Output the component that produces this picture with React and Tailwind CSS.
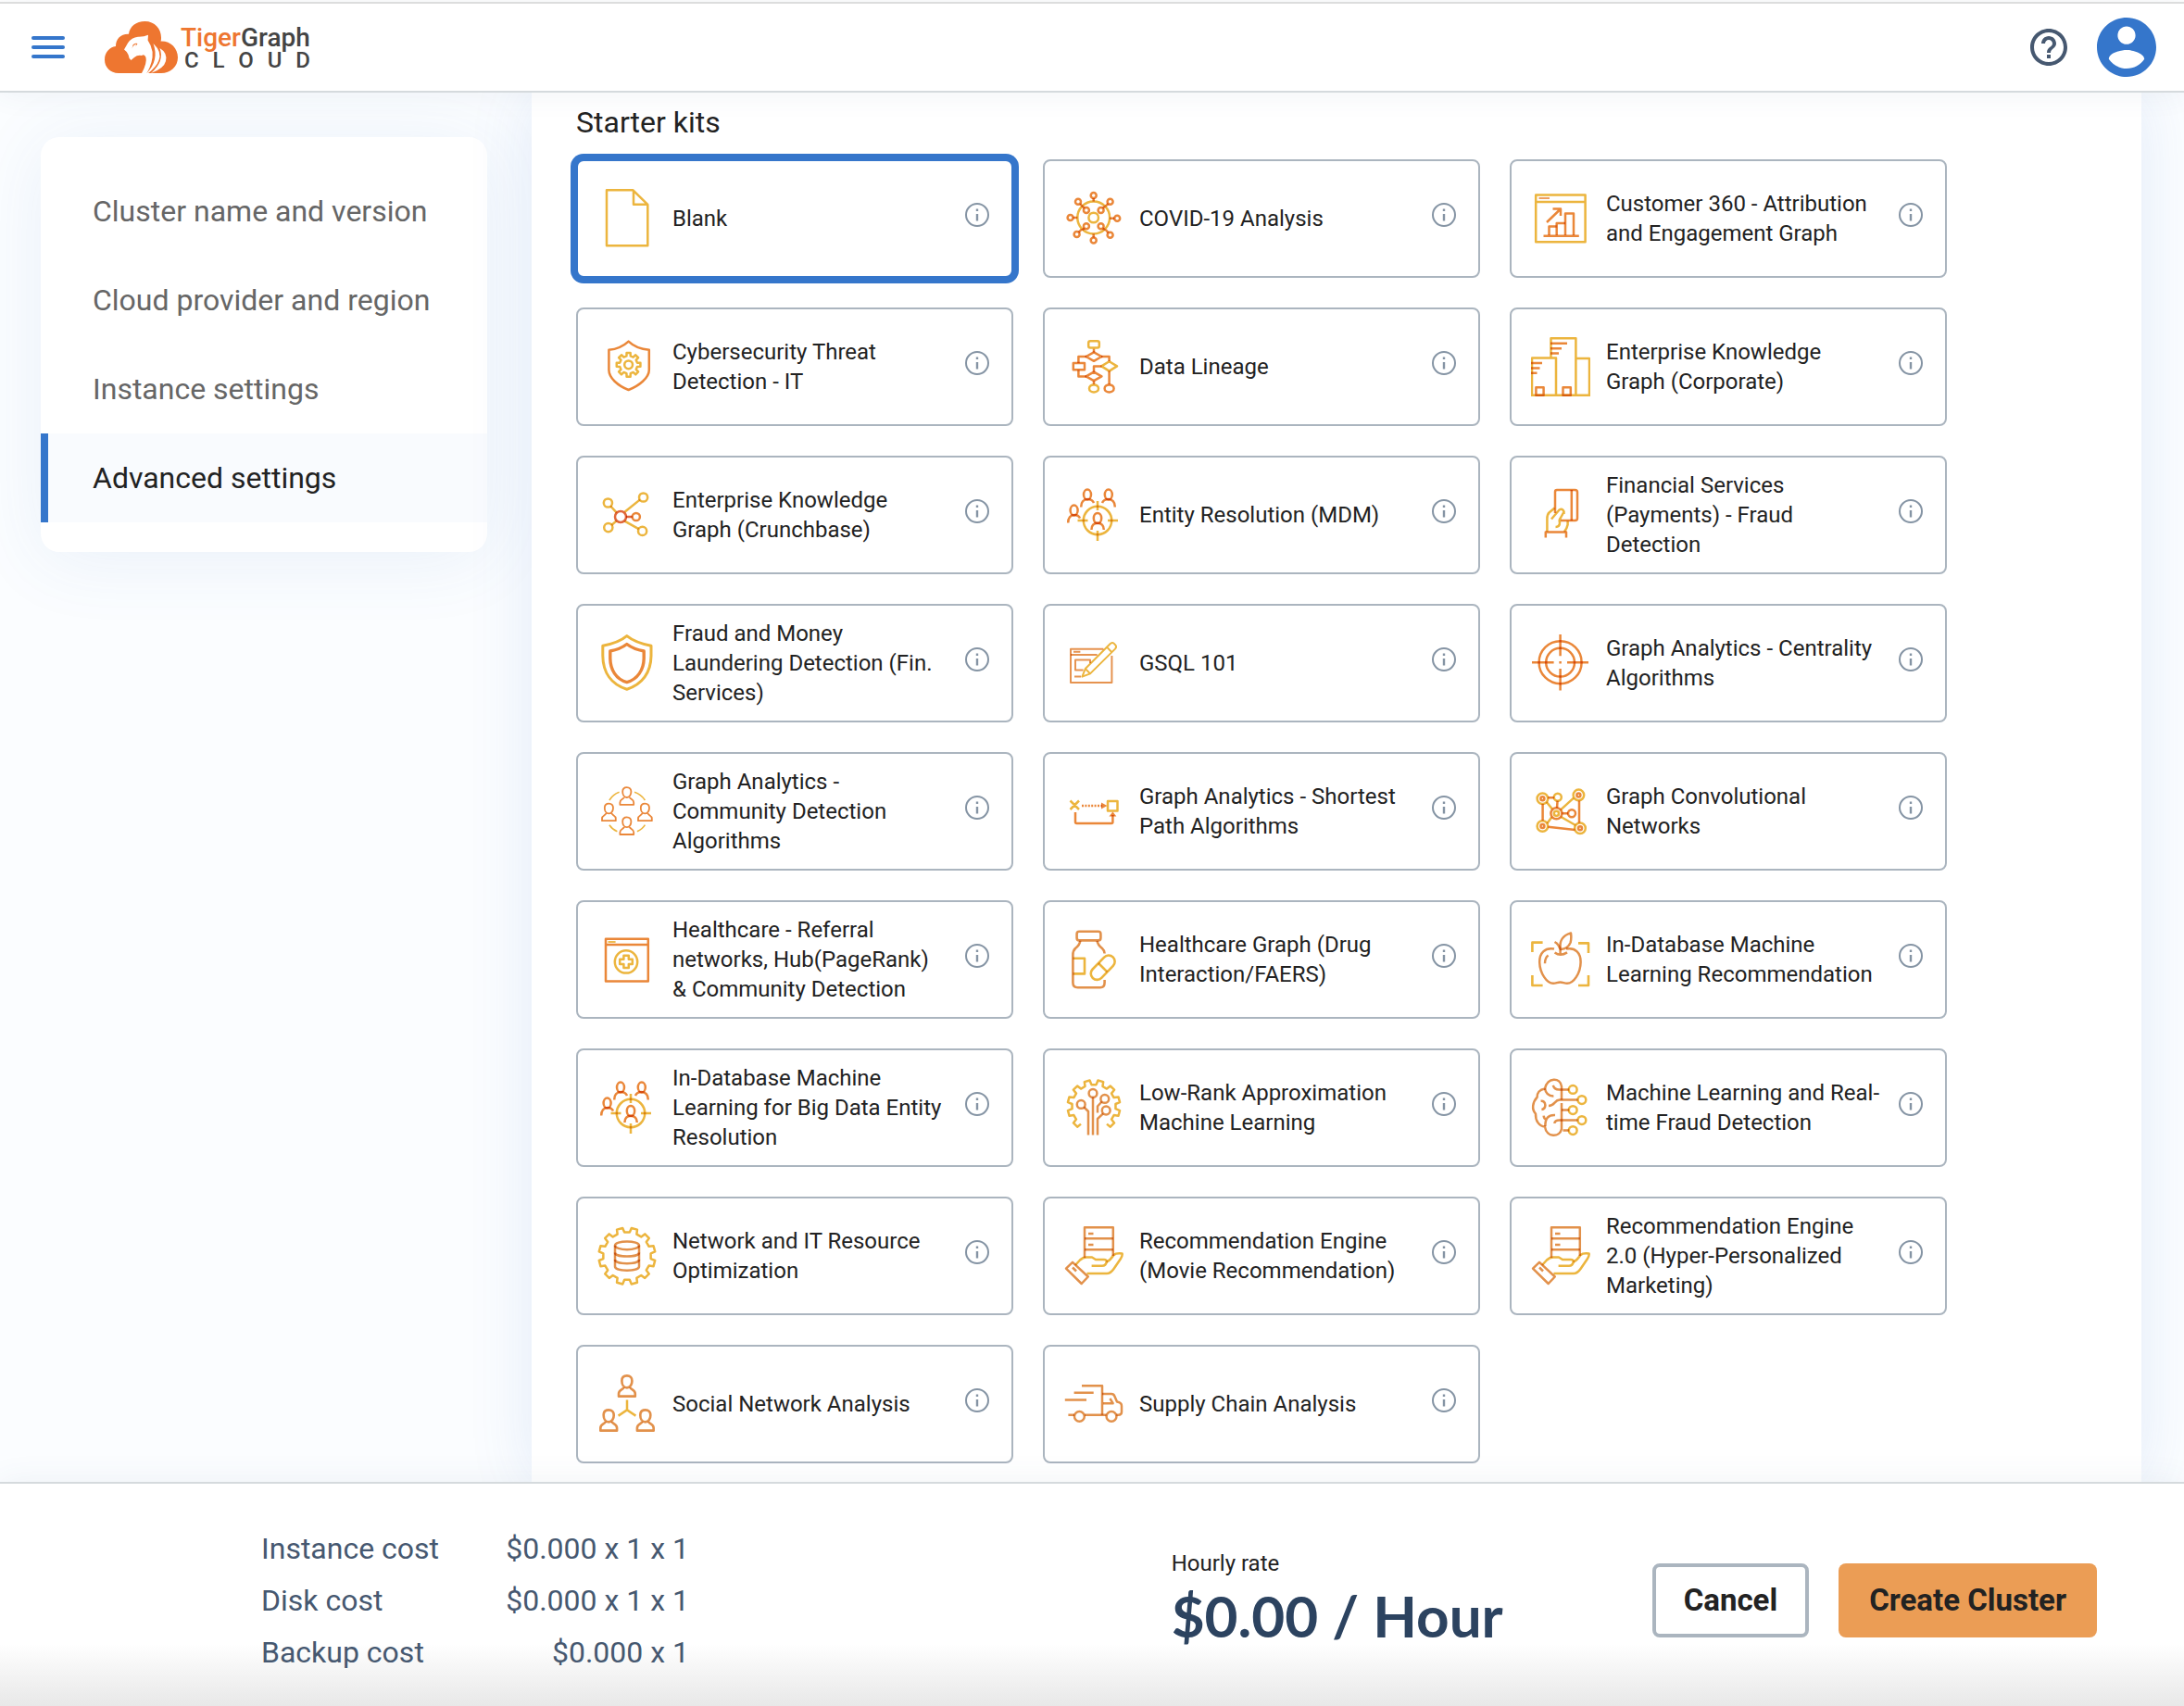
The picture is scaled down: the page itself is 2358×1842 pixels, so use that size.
import React, { useState } from "react";

const Y = "#ecb53e";
const O = "#ea8739";
const R = "#e0673a";

// Outline of a toothed wheel; from/to pick the run of teeth that is drawn.
function gearPath(cx, cy, teeth, outer, inner, from = 0, to = teeth) {
  const step = (Math.PI * 2) / teeth;
  const at = (r, a) => `${(cx + r * Math.sin(a)).toFixed(2)} ${(cy - r * Math.cos(a)).toFixed(2)}`;
  const points = [];
  for (let i = from; i < to; i++) {
    const a = i * step;
    points.push(at(inner, a - step * 0.29), at(outer, a - step * 0.2), at(outer, a + step * 0.2), at(inner, a + step * 0.29));
  }
  return "M" + points.join("L") + (to - from === teeth ? "Z" : "");
}

function Bust({ x, y, s = 1 }) {
  return (
    <g transform={`translate(${x} ${y}) scale(${s})`}>
      <path d="M0 .8C-3 .8-4.6 2.6-4.6 5.4C-4.6 8.6-3 11.6 0 11.6S4.6 8.6 4.6 5.4C4.6 2.6 3 .8 0 .8Z" />
      <path d="M-3 11.4C-3.4 13.6-7.4 13.4-7.4 17V19.4H7.4V17C7.4 13.4 3.4 13.6 3 11.4" />
    </g>
  );
}

function TargetPeople() {
  return (
    <>
      <g stroke={Y}>
        <circle cx="36" cy="38" r="15.2" />
        <path d="M36 17V27M36 49V60M14.5 38H25.5M47 38H58" />
      </g>
      <g stroke={O}>
        <ellipse cx="25" cy="10" rx="4" ry="5.5" />
        <path d="M18.3 23.5C18 18 21 15 25 15S31 16.5 32 19" />
        <ellipse cx="47.8" cy="10" rx="4" ry="5.5" />
        <path d="M41 19C42 16.5 44 15 47.8 15S55 18 54.7 23.5" />
        <ellipse cx="10.6" cy="27" rx="4" ry="5.5" />
        <path d="M4.2 40.5C4 35 7 32 10.6 32S16 33 17 35.5" />
        <ellipse cx="36" cy="35.5" rx="4.2" ry="5.5" />
        <path d="M29.5 48C29.3 43.5 32 40.8 36 40.8S42.9 43.5 42.7 48" />
      </g>
    </>
  );
}

function ServerHand() {
  return (
    <>
      <g stroke={Y}>
        <path d="M12 42L17 36.5Q20 33.5 24 33.5H30L34 36H43Q46 36 45.6 38.8Q45 42.7 41 42.7H29.6" />
        <path d="M45.6 38.6Q50 36.5 53.5 31Q56 28.6 62.5 29.4Q63.3 31 61 35L53.5 46Q50 51 46 51H24.5" />
      </g>
      <g stroke="#e2914b">
        <path d="M22 34V1.3H52.8V32" />
        <path d="M22 13.3H52.8M22 25.3H52.8" />
        <path d="M26 8H31.5M26 20H31.5" />
        <path d="M9 38.8L2 45.6L18.7 62L25.8 54.5Z" />
        <path d="M9 44.5L13 48.5" />
      </g>
    </>
  );
}

const ICONS = {
  blank: <path stroke={Y} d="M10 1.3H38.5L54.3 16.8V61.3H10ZM39 1.5V16.8H54.3" />,
  covid: (
    <>
      <g stroke={Y}>
        <circle cx="31.7" cy="31" r="17.4" />
        <circle cx="31.7" cy="31" r="5.3" />
      </g>
      <g stroke={O}>
        <circle cx="31.7" cy="7" r="3" />
        <circle cx="57.2" cy="31.7" r="3" />
        <circle cx="6.6" cy="31" r="3" />
        <circle cx="31.7" cy="55.6" r="3" />
        <circle cx="15" cy="13.7" r="3" />
        <circle cx="49.6" cy="13.7" r="3" />
        <circle cx="13.6" cy="49" r="3" />
        <circle cx="49.6" cy="49.7" r="3" />
        <circle cx="23.9" cy="23" r="3" />
        <circle cx="39.6" cy="23" r="3" />
        <circle cx="23.9" cy="40.3" r="3" />
        <circle cx="39.6" cy="40.3" r="3" />
        <path d="M31.7 10V13.5M54.2 31.7H49M9.6 31H14.3M31.7 48.5V52.6M17.2 16L19.5 18.8M47.5 16L44.5 18.6M15.7 46.8L18.8 43.5M47.6 47.4L44.8 44M21.8 20.8L19.6 18.6M41.8 20.8L44 18.6M21.8 42.4L19.4 44.4M41.8 42.4L44.2 44.4" />
      </g>
    </>
  ),
  customer: (
    <>
      <path stroke={Y} d="M5.2 6.4H58.6V57.3H5.2ZM5.2 14H58.6" />
      <g stroke={O}>
        <path strokeWidth="1.6" d="M8.5 10H20" />
        <path d="M13.5 50.7H51.8" />
        <path d="M19.5 50V40.5H27.7" />
        <path d="M27.7 50V37H37" />
        <path d="M37 50V26.5H46V50" />
        <path d="M17 36L31.5 22M23.5 21.5H32V29" />
      </g>
    </>
  ),
  cyber: (
    <>
      <path stroke={O} d="M33.6 4.6Q25 12.6 12.4 13.8V35.5C12.4 44 22 52.5 33.6 57C45 52.5 55.8 44 55.8 35.5V13.8Q42 12.6 33.6 4.6Z" />
      <path stroke={Y} d={gearPath(33.6, 29.8, 8, 13, 9.6)} />
      <circle stroke={Y} cx="33.6" cy="29.8" r="4.4" />
    </>
  ),
  lineage: (
    <>
      <g stroke={O}>
        <path d="M32 12V16.5M24 21H15.4V28M40 21H48.6V26M15.4 35.4V42.6H24M40.5 31.4H32V37.8M32 47.4V51M48.6 36.6V51" />
        <path d="M32 16.3L40.4 21L32 25.8L23.6 21Z" />
        <path d="M32 37.6L40.4 42.4L32 47.2L23.6 42.4Z" />
        <path d="M9.8 28H22V35.2H9.8Z" />
        <ellipse cx="48.6" cy="55.4" rx="5" ry="4" />
      </g>
      <g stroke={Y}>
        <rect x="26.2" y="4.3" width="11.6" height="7.2" rx="2" />
        <path d="M48.6 26.2L57 31.4L48.6 36.6L40.2 31.4Z" />
        <ellipse cx="32" cy="55.4" rx="5" ry="4" />
      </g>
    </>
  ),
  corporate: (
    <>
      <path stroke={Y} d="M21.5 22.5V1.3H48.4V62.8M1 62.8V22.5H27V62.8M48.4 23H63V62.8M0 62.8H64" />
      <g stroke={O}>
        <path d="M21 6.8H39M21 12.2H33M21 17.5H30M0 28H12M0 33.5H9.5M0 38.8H6.5" />
        <path d="M5.4 54.3H13.6V62.8H5.4ZM34.5 54.3H42.8V62.8H34.5Z" />
      </g>
    </>
  ),
  crunchbase: (
    <>
      <path stroke={Y} d="M14.3 22.5L20.8 29.6M45.8 15.6L29.5 28.8M15.2 43L20.6 38.4M44.6 47.2L29.4 38.6" />
      <g stroke={Y}>
        <circle cx="11.4" cy="19" r="4.6" />
        <circle cx="49.6" cy="13" r="4.6" />
        <circle cx="11.8" cy="45.6" r="4.6" />
        <circle cx="48.6" cy="49.4" r="4.6" />
      </g>
      <g stroke={R}>
        <circle cx="25" cy="34" r="6" />
        <path d="M31 34H37.6" />
      </g>
      <circle stroke={O} cx="41.8" cy="34" r="4.1" />
    </>
  ),
  entity: <TargetPeople />,
  payments: (
    <>
      <g stroke={O}>
        <path d="M26 30V7Q26 5 28 5H47.5Q50 5 50 7.5V35.5Q50 38 47.5 38H32" />
        <path d="M43.8 5V38" />
        <path d="M15.8 56.5V50.6H38V56.5" />
      </g>
      <path stroke={Y} d="M25.5 24.5L19.5 29.5Q17.5 31.5 17.4 36V50M22 36.5L30.5 26.5Q34 24.5 35.6 28.5L32 35Q30 37.5 31 40Q31 45 26.5 45M35.5 29V31M39.6 38.5V42.5Q39 46 36 50" />
    </>
  ),
  fraud: (
    <>
      <path stroke={Y} strokeWidth="3" d="M31.8 2.6Q23 10 5.8 13.2V24C6 42 15 55 31.8 60.2C48.5 55 57.8 42 58 24V13.2Q41 10 31.8 2.6Z" />
      <path stroke={O} strokeWidth="3.4" d="M31.8 11.5Q24.5 17 13.8 19V27C14 39 20 49.5 31.8 52.6C43.5 49.5 50 39 50.2 27V19Q39 17 31.8 11.5Z" />
    </>
  ),
  gsql: (
    <>
      <g stroke="#e69350" strokeWidth="2">
        <path d="M42.4 16.8H7V53H51.4V24" />
        <path d="M7 23H35.6M10 19.7H17.4M28 32V28.4H12V39.4H20.6M11 46.4H18" />
      </g>
      <path stroke={Y} strokeWidth="2" d="M19.4 46.6L22.8 38L49.5 11.2Q52 8.6 54.4 11.4Q57.4 14 55 16.6L28 43.4ZM46 14.6L51.4 20.2M22.8 38L28 43.4" />
    </>
  ),
  centrality: (
    <g stroke={O}>
      <circle cx="31.6" cy="31.2" r="23" />
      <circle cx="31.6" cy="31.2" r="15.4" />
      <path d="M31.6 1V24.3M31.6 38V61.5M1 31.2H24.6M39 31.2H62M31.6 30V32.4" />
    </g>
  ),
  community: (
    <>
      <path stroke={Y} strokeWidth="1.6" d="M12.9 20Q17 13.5 23.6 11.3M40 11.3Q47 13.5 51.4 20M12.9 46.7Q16 51.5 21.4 53.7M51.4 46.7Q48.5 51.5 42.9 53.7" />
      <g stroke={O} strokeWidth="1.8">
        <Bust x={31.8} y={5.4} />
        <Bust x={12.4} y={22.8} />
        <Bust x={51.4} y={22.8} />
        <Bust x={31.8} y={37.6} />
      </g>
    </>
  ),
  shortest: (
    <>
      <path stroke={Y} d="M6.5 20.5L16 30M16 20.5L6.5 30M47 21H57.5V31.6H47Z" />
      <g stroke={O}>
        <path strokeDasharray="2 1.4" d="M19 26H41" />
        <path d="M12 33V43.5Q12 45 13.5 45H51Q52.4 45 52.4 43.5V36" />
      </g>
      <path fill={O} stroke="none" d="M40 22.4L46.4 26L40 29.6ZM48.4 37.4L52.4 32.5L56.4 37.4Z" />
    </>
  ),
  convolutional: (
    <>
      <path stroke={Y} d="M16.8 22L23 29.6M46 17.6L32 30.4M17.4 45L22.4 38.2M48 47L32.4 38" />
      <g stroke={O}>
        <path d="M12.6 24V42M18.4 48.8L47.4 52M52 20.4V44.4M18.2 17.2H25M28.6 20.6L28 28.4M33.4 34.3H40" />
        <circle cx="12.4" cy="18.2" r="2" />
        <circle cx="51.4" cy="14.4" r="2" />
        <circle cx="12.4" cy="48" r="2" />
        <circle cx="53" cy="50.3" r="2" />
        <circle cx="44" cy="34.3" r="4" />
        <circle cx="27.4" cy="34.3" r="6" />
      </g>
      <g stroke={Y}>
        <circle cx="12.4" cy="18.2" r="5.8" />
        <circle cx="51.4" cy="14.4" r="5.8" />
        <circle cx="12.4" cy="48" r="5.8" />
        <circle cx="53" cy="50.3" r="5.8" />
        <circle cx="28.8" cy="16.8" r="4" />
        <circle cx="27.4" cy="34.3" r="2.6" />
      </g>
    </>
  ),
  referral: (
    <>
      <path stroke={O} d="M9 9.8H54.8V55.6H9ZM9 16H54.8" />
      <g stroke={Y}>
        <path strokeWidth="1.8" d="M11.5 13H19.6" />
        <circle cx="31" cy="34.4" r="12.2" />
        <path d="M28.4 27.8H33.8V31.8H37.8V37H33.8V41H28.4V37H24.2V31.8H28.4Z" />
      </g>
    </>
  ),
  drug: (
    <>
      <g stroke="#e2914b" strokeWidth="2.6">
        <rect x="13.6" y="1.8" width="25.8" height="9.6" rx="2.6" />
        <path d="M17.2 11.8Q17 16 12 20Q9.4 22.5 9.4 27V57Q9.4 62.2 14.6 62.2H39Q43.6 62.2 43.6 57V54M35.6 11.8Q36 16 41 20Q43.4 22 43.6 25.5" />
      </g>
      <g stroke={Y} strokeWidth="2.6">
        <path d="M9.4 30.8H22V47.4H9.4" />
        <rect x="26" y="34" width="31.4" height="13.4" rx="6.7" transform="rotate(-46 41.7 40.7)" />
        <path d="M37 36L46.4 45.4" />
      </g>
    </>
  ),
  apple: (
    <>
      <path stroke={Y} strokeWidth="2.6" d="M1.4 24V13.6H12.6M51 14.4H62V25M1.4 49V60H12.6M62 49V60H51" />
      <g stroke="#e2914b">
        <path d="M25 20.6C15 18.6 9 25 9.2 35C9.6 47 17 57.8 24 57.8C27 57.8 28.6 56.4 31.5 56.4S36 57.8 39 57.8C46 57.8 53.4 47 53.6 35C53.8 25 48 18.6 38 20.6" />
        <path d="M25.5 13Q30 15.5 31.6 21.5V27M25.6 24.4Q31.6 29 39 24.4" />
        <path d="M32 21Q40 20.4 42.6 13.6Q43.8 9 43 3.4Q36.5 5.4 33.6 9.6Q30.5 14 32 21Z" />
        <path d="M15 36.2Q15 30 18.6 27.4" />
      </g>
    </>
  ),
  bigdata: <TargetPeople />,
  lowrank: (
    <>
      <path stroke={Y} d={gearPath(32, 30.6, 12, 28.4, 23.6, -4.5, 5.5)} />
      <g stroke="#e2914b">
        <circle cx="31" cy="16.4" r="4.4" />
        <circle cx="18.2" cy="28.4" r="4.4" />
        <circle cx="43.8" cy="22.4" r="4.4" />
        <circle cx="45.2" cy="35" r="4.4" />
        <path d="M31 20.8V61.5M21.4 31.5L26 36V61.5M42 38.4L36 44V61.5M40.6 25.5L36 30.5V37.5" />
      </g>
    </>
  ),
  brain: (
    <>
      <g stroke={Y}>
        <circle cx="45.2" cy="12.4" r="4.4" />
        <circle cx="54.9" cy="23.6" r="4.4" />
        <circle cx="45.2" cy="34.6" r="4.4" />
        <circle cx="54.9" cy="45.6" r="4.4" />
        <circle cx="45.2" cy="56.6" r="4.4" />
      </g>
      <g stroke="#e2914b">
        <path d="M33 23.6V9C32 -1 17.5 -1.4 15 11.4C9 12.4 6.4 16.4 6.6 20.6C1.6 26 .4 34 5 38.6C4.6 46 8.6 52 15 52.6C16.6 64.4 31 64.4 33 55V27" />
        <path d="M23.8 7.8Q25.4 12.8 31 12.4H41M50.6 23.6H31C25 23.6 26 30 19 30M33 34.6H41M50.6 45.6H31Q25.4 45.4 25.4 49M34.5 56.6H41" />
        <path d="M15 11.4Q16.4 19.6 24.4 19.4M10.6 24.8Q15 24.4 15.4 29.4Q15.2 33.4 11.4 34M26 40Q15 39.4 15.4 52M13.6 40.6Q14 44.4 17 44.8" />
      </g>
    </>
  ),
  network: (
    <>
      <path stroke={Y} d={gearPath(32, 32.2, 12, 30.6, 25.8, 0.5, 12.5)} />
      <g stroke="#e2914b">
        <ellipse cx="32" cy="20.8" rx="13" ry="4.4" />
        <path d="M19 20.8V43.6C19 49 45 49 45 43.6V20.8" />
        <path d="M19 28.4C19 34 45 34 45 28.4" />
        <path d="M19 36C19 41.6 45 41.6 45 36" />
      </g>
    </>
  ),
  movie: <ServerHand />,
  marketing: <ServerHand />,
  social: (
    <>
      <path stroke={Y} d="M32 27.4V38.4L22.6 44.6M32 38.4L41.4 44.6" />
      <g stroke="#e2914b" strokeWidth="2.2">
        <Bust x={31.9} y={0.4} s={1.2} />
        <Bust x={12.2} y={37.4} s={1.2} />
        <Bust x={51.8} y={37.4} s={1.2} />
      </g>
    </>
  ),
  supply: (
    <g stroke="#e2914b">
      <path d="M19 12.2H41V43.8M10.6 19.8H31.7M.8 27.4H24" />
      <path d="M4.4 43.8H11M22 43.8H45.4" />
      <circle cx="16.4" cy="45.4" r="5.4" />
      <circle cx="51" cy="45.4" r="5.4" />
      <path d="M41 21H51Q53.4 21 54.4 23.4L57 29.6Q62 30.4 62 34V40.6Q62 43.8 58.6 43.8H56.4" />
      <path d="M42 31.2H52.6L49.4 26" />
    </g>
  ),
};

const KITS = [
  ["blank", "Blank"],
  ["covid", "COVID-19 Analysis"],
  ["customer", "Customer 360 - Attribution and Engagement Graph"],
  ["cyber", "Cybersecurity Threat Detection - IT"],
  ["lineage", "Data Lineage"],
  ["corporate", "Enterprise Knowledge Graph (Corporate)"],
  ["crunchbase", "Enterprise Knowledge Graph (Crunchbase)"],
  ["entity", "Entity Resolution (MDM)"],
  ["payments", "Financial Services (Payments) - Fraud Detection"],
  ["fraud", "Fraud and Money Laundering Detection (Fin. Services)"],
  ["gsql", "GSQL 101"],
  ["centrality", "Graph Analytics - Centrality Algorithms"],
  ["community", "Graph Analytics - Community Detection Algorithms"],
  ["shortest", "Graph Analytics - Shortest Path Algorithms"],
  ["convolutional", "Graph Convolutional Networks"],
  ["referral", "Healthcare - Referral networks, Hub(PageRank) &\u00a0Community Detection"],
  ["drug", "Healthcare Graph (Drug Interaction/FAERS)"],
  ["apple", "In-Database Machine Learning Recommendation"],
  ["bigdata", "In-Database Machine Learning for Big Data Entity Resolution"],
  ["lowrank", "Low-Rank Approximation Machine Learning"],
  ["brain", "Machine Learning and Real-time Fraud Detection"],
  ["network", "Network and IT Resource Optimization"],
  ["movie", "Recommendation Engine (Movie Recommendation)"],
  ["marketing", "Recommendation Engine 2.0 (Hyper-Personalized Marketing)"],
  ["social", "Social Network Analysis"],
  ["supply", "Supply Chain Analysis"],
];

const STEPS = ["Cluster name and version", "Cloud provider and region", "Instance settings", "Advanced settings"];

const COSTS = [
  ["Instance cost", "$0.000 x 1 x 1"],
  ["Disk cost", "$0.000 x 1 x 1"],
  ["Backup cost", "$0.000 x 1"],
];

function KitIcon({ name }) {
  return (
    <svg
      viewBox="0 0 64 64"
      className="isolate size-16 shrink-0 [&_circle]:mix-blend-multiply [&_ellipse]:mix-blend-multiply [&_path]:mix-blend-multiply"
      fill="none"
      strokeWidth="2.5"
      strokeLinejoin="round"
      aria-hidden="true"
    >
      {ICONS[name]}
    </svg>
  );
}

function KitCard({ id, title, selected, onSelect }) {
  return (
    <div
      className={
        selected
          ? "flex h-32 items-center rounded-lg border-2 border-[#3576cb] bg-white pr-6 pl-[21px] shadow-[0_0_0_6px_#3576cb]"
          : "flex h-32 items-center rounded-lg border-2 border-[#abb5bf] bg-white pr-6 pl-[21px]"
      }
    >
      <label className="flex h-full flex-1 cursor-pointer items-center gap-[17px]">
        <input type="radio" name="starter-kit" value={id} checked={selected} onChange={onSelect} className="sr-only" />
        <KitIcon name={id} />
        <span className="flex-1 text-2xl leading-8 text-[#222]">{title}</span>
      </label>
      <button type="button" aria-label={`About ${title}`} className="mb-2 ml-[17px] shrink-0">
        <svg viewBox="0 0 26 26" className="size-[26px]" aria-hidden="true">
          <circle cx="13" cy="13" r="12" fill="none" stroke="#8594a4" strokeWidth="2" />
          <path fill="#8594a4" d="M11.8 6.6h2.4V9h-2.4zM11.8 12h2.4v7.4h-2.4z" />
        </svg>
      </button>
    </div>
  );
}

function Logo() {
  return (
    <a href="#home" className="flex items-start" aria-label="TigerGraph Cloud">
      <svg viewBox="0 0 80 56" className="h-14 w-20" aria-hidden="true">
        <path
          fill="#ee7630"
          d="M15 56C6 56 0 49.500 0 41.500C0 33.500 5 28 12 27C12 19.500 17 13.500 26 13.800C27 5.500 34 0 43.500 0C54 0 61 8 61 17.500C61 19 61 20.500 60.500 21.500C71 21 79 29 79 39C79 49 71 56 61 56H50Z"
        />
        <path
          fill="#fff"
          d="M21 30.500L25 23.500Q29 17.500 36 16.800Q42 17 47 14.800L46.600 20.500Q50.500 26 51.600 33Q52.500 44 45.500 56H40Q46 45 44.500 39Q43 35 40 37Q35.500 36 32 39L28.500 42Q26 40 25.500 36Q24.500 33 21 30.500Z"
        />
        <path fill="#ee7630" d="M29.500 29.500L30.500 25.500Q32.500 23 35.500 24L33.600 27L34 24.600Q31 25.500 29.500 29.500Z" />
        <path fill="#fff" d="M52.500 24Q62 33 58.500 42Q56 49 47 56H45.500Q59 42 52.500 24Z" />
        <path fill="#fff" d="M59.500 29Q68 34 66 43Q64 51 50 56Q65 43 59.500 29Z" />
      </svg>
      <span className="ml-0.5 flex flex-col pt-1 font-medium text-[#444]">
        <span className="text-[28px] leading-7">
          <span className="text-[#ee7630]">Tiger</span>Graph
        </span>
        <span className="flex justify-between pl-1 text-2xl leading-5">
          <span>C</span>
          <span>L</span>
          <span>O</span>
          <span>U</span>
          <span>D</span>
        </span>
      </span>
    </a>
  );
}

function Header() {
  return (
    <header className="relative z-10 mt-0.5 flex h-[98px] items-center justify-between border-t-2 border-b-2 border-t-[#dcdddd] border-b-[#d5dadd] bg-white pr-[30px] pl-[34px] shadow-[0_0_32px_rgba(60,90,130,0.08)]">
      <div className="flex items-center gap-[43px]">
        <button type="button" aria-label="Menu" className="flex w-9 flex-col gap-1.5">
          <span className="h-1 rounded-full bg-[#3576cb]" />
          <span className="h-1 rounded-full bg-[#3576cb]" />
          <span className="h-1 rounded-full bg-[#3576cb]" />
        </button>
        <Logo />
      </div>
      <div className="flex items-center gap-8">
        <button type="button" aria-label="Help">
          <svg viewBox="2 2 20 20" className="size-10" fill="#465870" aria-hidden="true">
            <path d="M11 18h2v-2h-2v2zm1-16C6.480 2 2 6.480 2 12s4.480 10 10 10 10-4.480 10-10S17.520 2 12 2zm0 18c-4.410 0-8-3.590-8-8s3.590-8 8-8 8 3.590 8 8-3.590 8-8 8zm0-14c-2.210 0-4 1.790-4 4h2c0-1.100.9-2 2-2s2 .9 2 2c0 2-3 1.750-3 5h2c0-2.250 3-2.500 3-5 0-2.210-1.790-4-4-4z" />
          </svg>
        </button>
        <button type="button" aria-label="Account">
          <svg viewBox="2 2 20 20" className="size-16" fill="#3576cb" aria-hidden="true">
            <path d="M12 2C6.480 2 2 6.480 2 12s4.480 10 10 10 10-4.480 10-10S17.520 2 12 2zm0 3c1.660 0 3 1.340 3 3s-1.340 3-3 3-3-1.340-3-3 1.340-3 3-3zm0 14.200c-2.500 0-4.710-1.280-6-3.220.03-1.990 4-3.080 6-3.080 1.990 0 5.970 1.090 6 3.080-1.290 1.940-3.500 3.220-6 3.220z" />
          </svg>
        </button>
      </div>
    </header>
  );
}

function Sidebar() {
  return (
    <aside className="w-[574px] shrink-0 pt-12 pr-12 pl-11">
      <nav className="overflow-hidden rounded-[20px] bg-white py-8 shadow-[0_8px_80px_rgba(53,110,190,0.09)]">
        {STEPS.map((step, i) => (
          <a
            key={step}
            href={`#step-${i + 1}`}
            aria-current={i === 3 ? "step" : undefined}
            className={
              i === 3
                ? "flex h-24 items-center border-l-8 border-[#3576cb] bg-[#f9fbfe] pl-12 text-[32px] text-[#222]"
                : "flex h-24 items-center border-l-8 border-transparent pl-12 text-[32px] text-[#666]"
            }
          >
            {step}
          </a>
        ))}
      </nav>
    </aside>
  );
}

function Footer() {
  return (
    <footer className="relative z-10 flex items-center border-t-2 border-[#d5dadd] bg-linear-to-b from-white from-72% to-[#e8e8e8] pt-[42px] pr-[94px] pb-[30px] pl-[282px] shadow-[0_0_32px_rgba(60,90,130,0.08)]">
      <dl className="w-[462px] text-[32px] leading-[56px] text-[#465870]">
        {COSTS.map(([name, value]) => (
          <div key={name} className="flex justify-between">
            <dt>{name}</dt>
            <dd>{value}</dd>
          </div>
        ))}
      </dl>
      <div className="mr-[147px] ml-auto w-[372px]">
        <p className="text-2xl leading-8 text-[#222]">Hourly rate</p>
        <p className="font-[Lato,sans-serif] text-[62px] leading-[80px] font-bold whitespace-nowrap text-[#2c4360]">$0.00 / Hour</p>
      </div>
      <div className="flex gap-8 text-[33px] font-bold text-[#222]">
        <button type="button" className="h-20 rounded-lg border-4 border-[#abb5bf] bg-white px-[30px]">
          Cancel
        </button>
        <button type="button" className="h-20 rounded-lg bg-[#eb9d55] px-[33px]">
          Create Cluster
        </button>
      </div>
    </footer>
  );
}

export default function App() {
  const [kit, setKit] = useState("blank");
  return (
    <div className="flex min-h-screen flex-col bg-white font-[Roboto,sans-serif]">
      <Header />
      <main className="flex flex-1 overflow-hidden bg-[#fbfdff]">
        <Sidebar />
        <section className="mr-[46px] flex-1 bg-white px-12 pt-3 pb-5 shadow-[0_0_64px_rgba(53,110,200,0.13)]">
          <h2 className="mb-5 text-[32px] leading-10 text-[#222]">Starter kits</h2>
          <div className="grid max-w-[1480px] grid-cols-3 gap-8">
            {KITS.map(([id, title]) => (
              <KitCard key={id} id={id} title={title} selected={kit === id} onSelect={() => setKit(id)} />
            ))}
          </div>
        </section>
      </main>
      <Footer />
    </div>
  );
}
